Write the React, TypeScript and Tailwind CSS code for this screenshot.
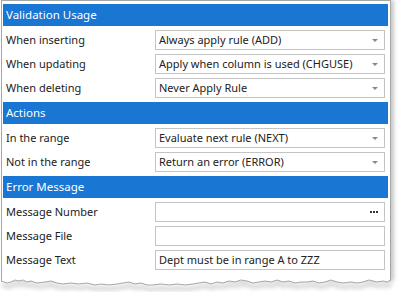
const sections = [
  {
    title: "Validation Usage",
    rows: [
      { label: "When inserting", value: "Always apply rule (ADD)", kind: "select" },
      { label: "When updating", value: "Apply when column is used (CHGUSE)", kind: "select" },
      { label: "When deleting", value: "Never Apply Rule", kind: "select" },
    ],
  },
  {
    title: "Actions",
    rows: [
      { label: "In the range", value: "Evaluate next rule (NEXT)", kind: "select" },
      { label: "Not in the range", value: "Return an error (ERROR)", kind: "select" },
    ],
  },
  {
    title: "Error Message",
    rows: [
      { label: "Message Number", value: "", kind: "dots" },
      { label: "Message File", value: "", kind: "text" },
      { label: "Message Text", value: "Dept must be in range A to ZZZ", kind: "text" },
    ],
  },
];

function Arrow() {
  return (
    <svg width="6" height="3" viewBox="0 0 6 3" className="shrink-0">
      <path d="M0 0 L6 0 L3 3 Z" fill="#8a8a8a" />
    </svg>
  );
}

function Dots() {
  return (
    <svg width="8" height="2" viewBox="0 0 8 2" className="shrink-0">
      <rect x="0" y="0" width="2" height="2" fill="#333" />
      <rect x="3" y="0" width="2" height="2" fill="#333" />
      <rect x="6" y="0" width="2" height="2" fill="#333" />
    </svg>
  );
}

function TornEdge() {
  const pts =
    "0,4 6,6 10,5 14,3 18,4 22,3 26,5 30,4 36,6 44,5 50,4 56,6 62,7 70,6 78,7 86,6 94,8 100,7 108,8 116,7 122,6 128,5 134,7 140,6 146,8 152,8 160,7 168,8 176,7 184,8 192,7 198,6 204,5 210,7 216,5 222,6 228,4 234,5 240,3 246,4 252,6 258,5 264,4 270,5 276,3 282,5 288,4 294,6 300,5 306,5 312,4 318,6 324,5 330,3 336,5 342,6 350,5 356,6 362,5 368,3 372,4 376,5 382,4 386,5 390,3";
  return (
    <svg width="400" height="24" viewBox="0 0 400 24" className="absolute left-0 top-[277px]">
      <defs>
        <filter id="blur" x="-10%" y="-50%" width="120%" height="200%">
          <feGaussianBlur stdDeviation="2" />
        </filter>
      </defs>
      <polyline points={pts} transform="translate(2 4)" fill="none" stroke="#b0b0b0" strokeWidth="3" filter="url(#blur)" opacity="0.7" />
      <polygon points={`0,0 ${pts} 390,0`} transform="translate(1 0)" fill="#ffffff" />
      <polyline points={pts} transform="translate(1 0)" fill="none" stroke="#a6a6a6" strokeWidth="1" />
      <line x1="1.5" y1="0" x2="1.5" y2="4" stroke="#a6a6a6" />
      <line x1="390.5" y1="0" x2="390.5" y2="4" stroke="#a6a6a6" />
    </svg>
  );
}

export default function App() {
  return (
    <div className="relative w-[403px] h-[301px] bg-white overflow-hidden font-['Noto_Sans',sans-serif] text-[11px] text-[#222222]">
      <div className="ml-[1px] w-[390px] h-[281px] border-l border-t border-r border-[#a6a6a6] pt-[3px] pl-[1px] pr-[2px] shadow-[3px_0_4px_rgba(0,0,0,0.22)]">
        {sections.map((s, i) => (
          <div key={s.title} className={i > 0 ? "mt-[4px]" : ""}>
            <div className="h-[22px] bg-[#1976d2] text-white text-[11.5px] pl-[3px] flex items-center">
              {s.title}
            </div>
            {s.rows.map((r) => (
              <div key={r.label} className="flex items-center h-[20px] mt-[4px]">
                <div className="w-[152px] pl-[3px]">{r.label}</div>
                <div className="w-[230px] h-[20px] border border-[#c4c4c4] flex items-center pl-[3px] pr-[6px]">
                  <span className="flex-1 whitespace-nowrap overflow-hidden">{r.value}</span>
                  {r.kind === "select" && <Arrow />}
                  {r.kind === "dots" && <Dots />}
                </div>
              </div>
            ))}
          </div>
        ))}
      </div>
      <TornEdge />
    </div>
  );
}
